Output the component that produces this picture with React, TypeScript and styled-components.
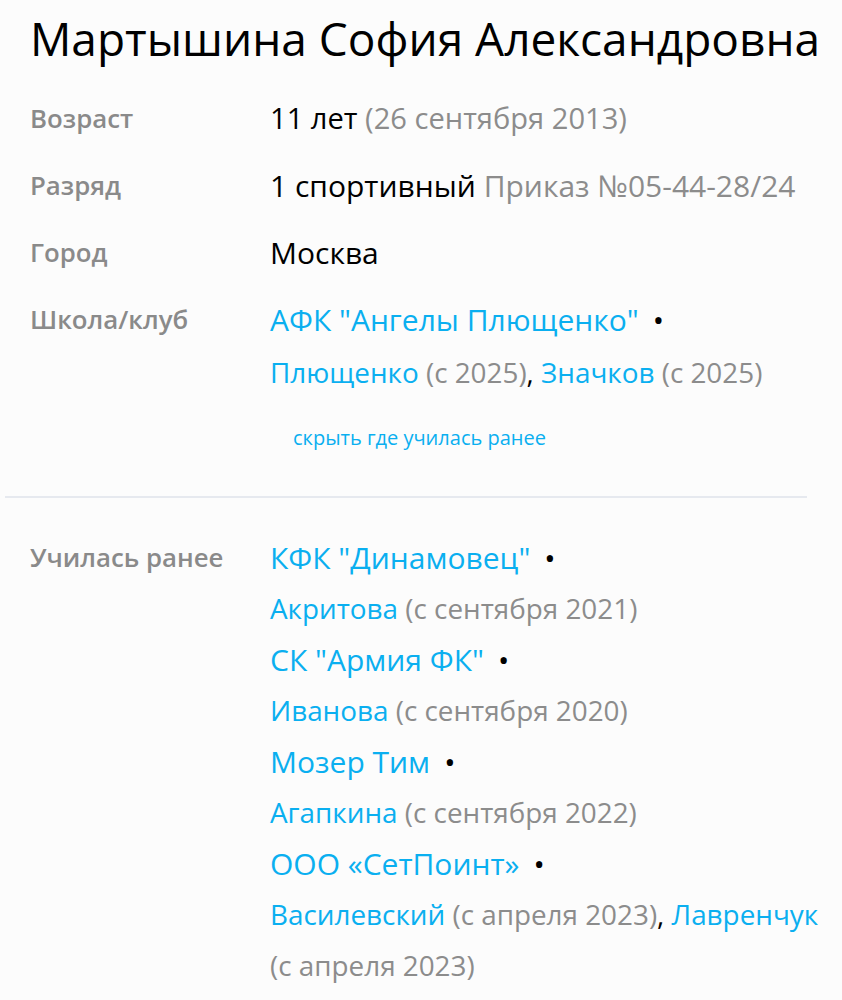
import styled, { createGlobalStyle } from 'styled-components';

const GlobalStyle = createGlobalStyle`
    body {
        margin: 0;
        background: #fcfcfc;
        font-family: 'Open Sans', 'Noto Sans', sans-serif;
        color: #000;
    }
`;

const Page = styled.div`
    padding: 10px 0 30px;
`;

const Title = styled.h1`
    margin: 0 0 26px 30px;
    font-size: 46px;
    line-height: 56px;
    font-weight: 500;
`;

const Section = styled.div`
    display: grid;
    grid-template-columns: 240px 1fr;
    row-gap: 14px;
    padding: 0 12px 0 30px;
`;

const Label = styled.div<{ $lh: number }>`
    font-size: 25.8px;
    font-weight: 600;
    color: #8a8a8a;
    line-height: ${(p) => p.$lh}px;
`;

const Value = styled.div<{ $lh: number; $size: number }>`
    font-size: ${(p) => p.$size}px;
    line-height: ${(p) => p.$lh}px;
`;

const NameLine = styled.div`
    font-size: 30px;
`;

const CoachLine = styled.div`
    font-size: 27.85px;
`;

const Muted = styled.span`
    color: #8c8c8c;
`;

const A = styled.a`
    color: #0aaff0;
    text-decoration: none;
`;

const Dot = styled.span`
    margin-left: 14px;
    font-size: 30px;
    line-height: 0;
`;

const Toggle = styled.a`
    display: block;
    margin: 26px 0 0 23px;
    font-size: 20px;
    line-height: 26px;
    color: #0aaff0;
    text-decoration: none;
`;

const Divider = styled.hr`
    margin: 45px 35px 34px 5px;
    border: 0;
    height: 2px;
    background: #e6e9ef;
`;

type Coach = { name: string; since: string };
type School = { name: string; coaches: Coach[] };

const current: School = {
    name: 'АФК "Ангелы Плющенко"',
    coaches: [
        { name: 'Плющенко', since: 'с 2025' },
        { name: 'Значков', since: 'с 2025' },
    ],
};

const past: School[] = [
    { name: 'КФК "Динамовец"', coaches: [{ name: 'Акритова', since: 'с сентября 2021' }] },
    { name: 'СК "Армия ФК"', coaches: [{ name: 'Иванова', since: 'с сентября 2020' }] },
    { name: 'Мозер Тим', coaches: [{ name: 'Агапкина', since: 'с сентября 2022' }] },
    {
        name: 'ООО «СетПоинт»',
        coaches: [
            { name: 'Василевский', since: 'с апреля 2023' },
            { name: 'Лавренчук', since: 'с апреля 2023' },
        ],
    },
];

function SchoolLines({ school }: { school: School }) {
    return (
        <>
            <NameLine>
                <A href="#">{school.name}</A>
                <Dot>•</Dot>
            </NameLine>
            <CoachLine>
                {school.coaches.map((c, i) => (
                    <span key={c.name}>
                        {i > 0 && ', '}
                        <A href="#">{c.name}</A> <Muted>({c.since})</Muted>
                    </span>
                ))}
            </CoachLine>
        </>
    );
}

export default function App() {
    return (
        <Page>
            <GlobalStyle />
            <Title>Мартышина София Александровна</Title>
            <Section>
                <Label $lh={53}>Возраст</Label>
                <Value $lh={53} $size={29.1}>
                    11 лет <Muted>(26 сентября 2013)</Muted>
                </Value>
                <Label $lh={53}>Разряд</Label>
                <Value $lh={53} $size={30}>
                    1 спортивный <Muted>Приказ №05-44-28/24</Muted>
                </Value>
                <Label $lh={53}>Город</Label>
                <Value $lh={53} $size={30}>
                    Москва
                </Value>
                <Label $lh={53}>Школа/клуб</Label>
                <Value $lh={53} $size={28}>
                    <SchoolLines school={current} />
                    <Toggle href="#">скрыть где училась ранее</Toggle>
                </Value>
            </Section>
            <Divider />
            <Section>
                <Label $lh={51}>Училась ранее</Label>
                <Value $lh={51} $size={28}>
                    {past.map((s) => (
                        <SchoolLines key={s.name} school={s} />
                    ))}
                </Value>
            </Section>
        </Page>
    );
}
